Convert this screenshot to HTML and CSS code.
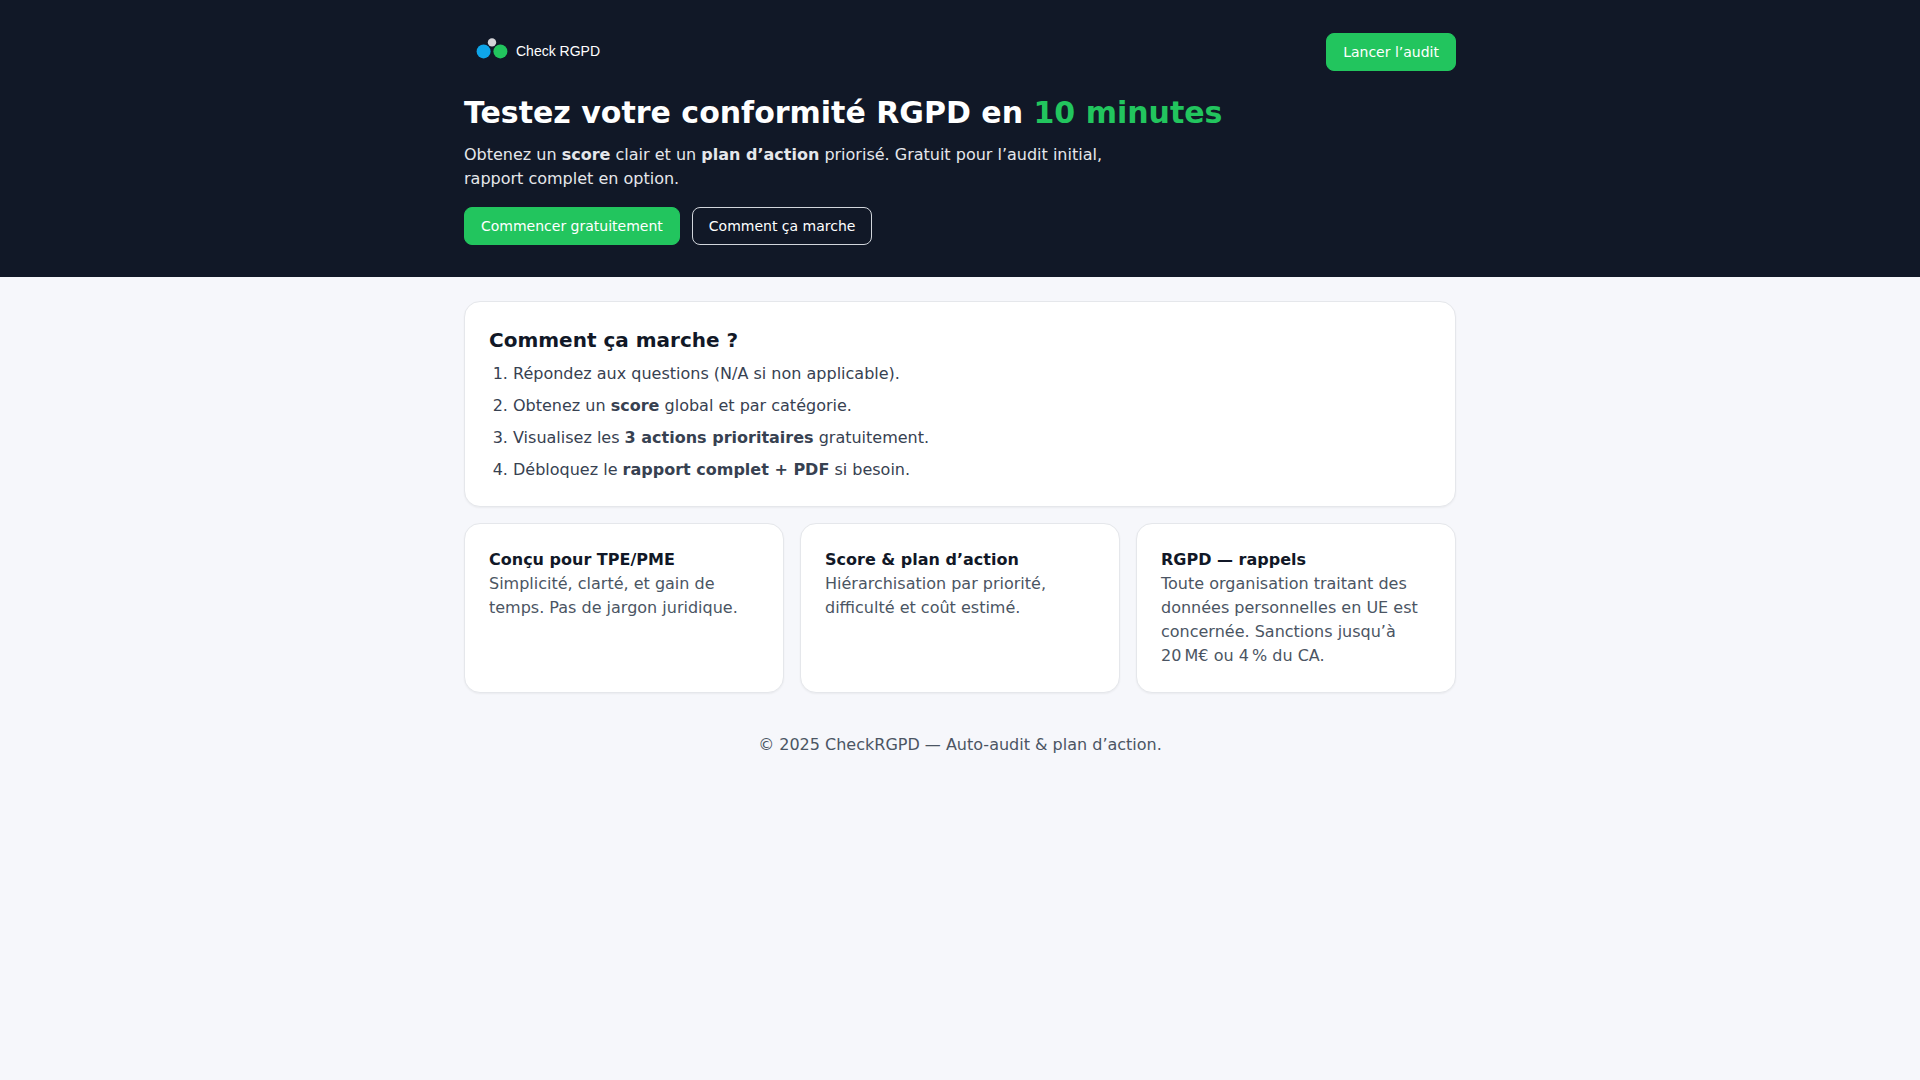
FILE: index.html
```html
<!DOCTYPE html>
<html lang="fr">
<head>
  <meta charset="UTF-8" />
  <meta name="viewport" content="width=device-width, initial-scale=1.0"/>
  <title>CheckRGPD – Auto-audit RGPD</title>
  <link rel="stylesheet" href="styles.css">
</head>
<body>
  <header class="hero">
    <div class="container">
      <nav class="topbar">
        <a href="index.html" class="logo">
          <svg width="160" height="40" viewBox="0 0 160 40" role="img" aria-label="Check RGPD">
            <circle cx="19.6" cy="19.4" r="7" fill="#0ea5e9"/>
            <circle cx="36.4" cy="19.4" r="7" fill="#22c55e"/>
            <circle cx="28" cy="10.4" r="4.2" fill="#d4d4d8"/>
            <text x="52" y="24">Check RGPD</text>
          </svg>
        </a>
        <a href="audit.html" class="btn">Lancer l’audit</a>
      </nav>
      <h1>Testez votre conformité RGPD en <span>10 minutes</span></h1>
      <p class="lead">Obtenez un <strong>score</strong> clair et un <strong>plan d’action</strong> priorisé. Gratuit pour l’audit initial, rapport complet en option.</p>
      <div class="actions">
        <a href="audit.html" class="btn">Commencer gratuitement</a>
        <a href="#how" class="btn btn-outline">Comment ça marche</a>
      </div>
    </div>
  </header>

  <main class="container content">
    <section id="how" class="card">
      <h2>Comment ça marche ?</h2>
      <ol>
        <li>Répondez aux questions (N/A si non applicable).</li>
        <li>Obtenez un <strong>score</strong> global et par catégorie.</li>
        <li>Visualisez les <strong>3 actions prioritaires</strong> gratuitement.</li>
        <li>Débloquez le <strong>rapport complet + PDF</strong> si besoin.</li>
      </ol>
    </section>

    <section class="grid">
      <div class="card">
        <h3>Conçu pour TPE/PME</h3>
        <p>Simplicité, clarté, et gain de temps. Pas de jargon juridique.</p>
      </div>
      <div class="card">
        <h3>Score &amp; plan d’action</h3>
        <p>Hiérarchisation par priorité, difficulté et coût estimé.</p>
      </div>
      <div class="card">
        <h3>RGPD — rappels</h3>
        <p>Toute organisation traitant des données personnelles en UE est concernée. Sanctions jusqu’à 20&#8239;M€ ou 4&#8239;% du CA.</p>
      </div>
    </section>
  </main>

  <footer>© 2025 CheckRGPD — Auto-audit &amp; plan d’action.</footer>
</body>
</html>
```
FILE: styles.css
```css
* {
  box-sizing: border-box;
  margin: 0;
  padding: 0;
}
body {
  background: #f6f7fb;
  color: #111827;
  font-family: "DejaVu Sans", sans-serif;
  font-size: 16px;
  line-height: 24px;
}
.container {
  max-width: 1024px;
  margin: 0 auto;
  padding: 0 16px;
}
.hero {
  background: #111827;
  color: white;
  padding: 32px 0;
}
.topbar {
  display: flex;
  justify-content: space-between;
  align-items: center;
  margin-bottom: 23px;
}
.logo svg {
  display: block;
}
.logo text {
  fill: white;
  font-family: "Liberation Sans", Arial, sans-serif;
  font-size: 14px;
}
.btn {
  display: inline-block;
  background: #22c55e;
  border: 1px solid #22c55e;
  border-radius: 8px;
  color: white;
  padding: 8px 16px;
  font-size: 14px;
  line-height: 20px;
  text-decoration: none;
}
.btn-outline {
  background: transparent;
  border-color: #d1d5db;
}
h1 {
  font-size: 30px;
  line-height: 36px;
}
h1 span {
  color: #22c55e;
}
.lead {
  max-width: 672px;
  margin-top: 12px;
  color: #e5e7eb;
}
.actions {
  display: flex;
  gap: 12px;
  margin-top: 16px;
}
.content {
  padding-top: 24px;
}
.card {
  background: white;
  border: 1px solid #e5e7eb;
  border-radius: 16px;
  padding: 24px;
  box-shadow: 0 1px 2px rgba(0, 0, 0, 0.05);
}
h2 {
  font-size: 20px;
  line-height: 28px;
  margin-bottom: 8px;
}
ol {
  padding-left: 24px;
  color: #374151;
}
li + li {
  margin-top: 8px;
}
.grid {
  display: grid;
  grid-template-columns: repeat(3, 1fr);
  gap: 16px;
  margin-top: 16px;
}
h3 {
  font-size: 16px;
}
.card p {
  color: #4b5563;
}
footer {
  padding: 40px 16px;
  color: #4b5563;
  text-align: center;
}
@media (max-width: 768px) {
  .grid {
    grid-template-columns: 1fr;
  }
}
```
